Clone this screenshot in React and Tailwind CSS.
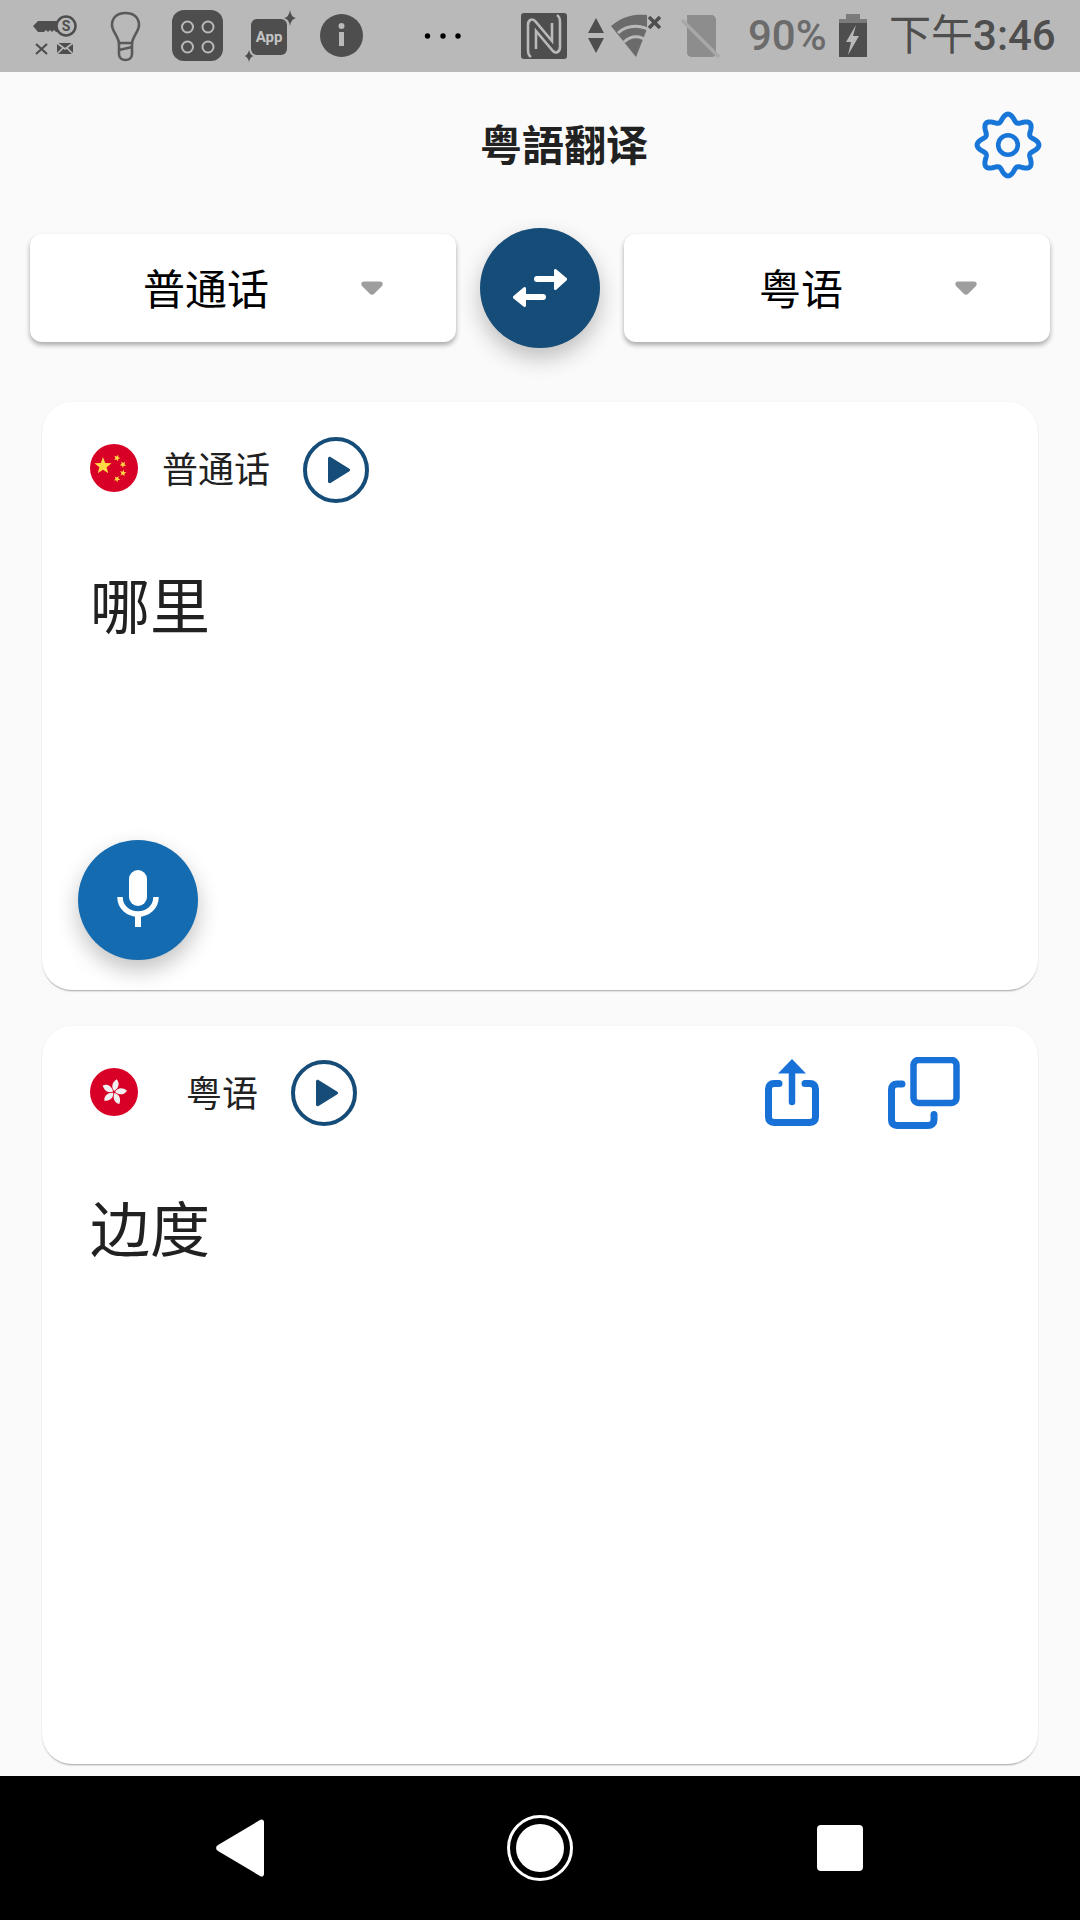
import React from "react";

const CJK = { fontFamily: '"Noto Sans CJK SC", "Noto Sans", sans-serif' };

function Sparkle({ x, y, r }) {
  return <path d={`M${x} ${y - r}Q${x + 1} ${y - 1} ${x + r * 0.75} ${y}Q${x + 1} ${y + 1} ${x} ${y + r}Q${x - 1} ${y + 1} ${x - r * 0.75} ${y}Q${x - 1} ${y - 1} ${x} ${y - r}Z`} fill="#4e4e4e" />;
}

function StatusBar() {
  return (
    <div className="relative h-[72px] shrink-0 bg-[#b9b9b9]">
      <svg width="1080" height="72" viewBox="0 0 1080 72" className="absolute inset-0 block">
        <g fill="#4e4e4e">
          <path d="M33 26l5-5h21v11h-3l-2-2-2 2-2-2-2 2-2-2-2 2h-6z" />
          <circle cx="66" cy="26" r="9.5" fill="#b9b9b9" stroke="#4e4e4e" strokeWidth="2.5" />
          <path d="M36 44l11 10M47 44L36 54" stroke="#4e4e4e" strokeWidth="2.2" />
          <path d="M57 43h16v11H57z" />
          <path d="M57 43l8 6 8-6M57 54l6-6M73 54l-6-6" stroke="#b9b9b9" strokeWidth="1.6" fill="none" />
        </g>
        <text x="66" y="31" textAnchor="middle" fontFamily="Roboto" fontWeight="700" fontSize="14" fill="#4e4e4e">S</text>
        <path d="M119 43C118 36 112 31 112 25C112 17 118 13 125.500 13C133 13 139 17 139 25C139 31 133 36 132 43Z" fill="none" stroke="#5a5a5a" strokeWidth="2.6" />
        <path d="M119 43V54C119 58 122 60 125.500 60C129 60 132 58 132 54V43M119 50L132 47" fill="none" stroke="#5a5a5a" strokeWidth="2.6" />
        <rect x="172" y="10" width="51" height="51" rx="12" fill="#4e4e4e" />
        {[[187.500, 27], [208, 27], [187.500, 47], [208, 47]].map(([x, y]) => (
          <circle key={`${x}-${y}`} cx={x} cy={y} r="5.500" fill="none" stroke="#b9b9b9" strokeWidth="2" />
        ))}
        <rect x="251" y="19" width="36" height="36" rx="6" fill="#4e4e4e" />
        <text x="269" y="42" textAnchor="middle" fontFamily="Roboto" fontWeight="700" fontSize="15" fill="#c4c4c4">App</text>
        <Sparkle x={290} y={18} r={8} />
        <Sparkle x={249} y={56} r={6} />
        <circle cx="341.500" cy="35.500" r="21.500" fill="#4e4e4e" />
        <circle cx="341.500" cy="26" r="3" fill="#b9b9b9" />
        <rect x="339" y="32" width="5" height="14" fill="#b9b9b9" />
        <circle cx="427.500" cy="36" r="2.700" fill="#000" />
        <circle cx="443" cy="36" r="2.700" fill="#000" />
        <circle cx="458" cy="36" r="2.700" fill="#000" />
        <rect x="521" y="13" width="46" height="46" rx="3" fill="#4e4e4e" />
        <path d="M531 57C528 55 528 52 528 50V25C528 20 532 18 535 21L552 41V23M557 15C560 17 560 20 560 22V47C560 52 556 54 553 51L536 31V49" fill="none" stroke="#b9b9b9" strokeWidth="2.600" />
        <path d="M596 18l8 15h-16zM596 53l8-15h-16z" fill="#4e4e4e" />
        <path d="M611 26C624 15 636 14 647 15V29L636 57Z" fill="#6b6b6b" />
        <path d="M618 33C628 24 643 24 653 33M624 42C631 35 641 35 648 42" fill="none" stroke="#b9b9b9" strokeWidth="3" />
        <path d="M649 17l11 11M660 17L649 28" stroke="#4e4e4e" strokeWidth="3.500" />
        <path d="M687 15H711C714 15 716 17 716 20V54C716 56 714 57 711 57H692C689 57 687 55 687 53Z" fill="#8d8d8d" />
        <path d="M682 20L719 57" stroke="#a8a8a8" strokeWidth="3.500" />
        <path d="M846 14h14v5h7v4H839v-4h7z" fill="#7b7b7b" />
        <rect x="839" y="23" width="28" height="34" fill="#4e4e4e" />
        <path d="M856 25L846 42h5l-3 13 11-19h-6z" fill="#b9b9b9" />
      </svg>
      <span className="absolute left-[748px] top-[10px] text-[42px] leading-[52px] font-medium text-[#6b6b6b]" style={{ fontFamily: "Roboto, sans-serif" }}>90%</span>
      <span className="absolute left-[889px] top-[10px] text-[42px] leading-[52px] text-[#4e4e4e] font-normal" style={{ fontFamily: 'Roboto, "Noto Sans CJK SC", sans-serif' }}>下午<span className="font-medium">3:46</span></span>
    </div>
  );
}

function GearIcon() {
  const pts = [];
  for (let i = 0; i < 320; i++) {
    const t = (i / 320) * Math.PI * 2;
    const r = 27.3 + 3.6 * Math.cos(8 * t);
    const x = 35 + r * Math.sin(t);
    const y = 35 - r * Math.cos(t);
    pts.push(`${x.toFixed(2)},${y.toFixed(2)}`);
  }
  return (
    <svg width="70" height="70" viewBox="0 0 70 70" className="block shrink-0">
      <polygon points={pts.join(" ")} fill="none" stroke="#1976d9" strokeWidth="5" strokeLinejoin="round" />
      <circle cx="35" cy="35" r="9.800" fill="none" stroke="#1976d9" strokeWidth="4.600" />
    </svg>
  );
}

function Header() {
  return (
    <div className="h-[146px] shrink-0 flex items-center pl-[155px] pr-[37px]">
      <h1 className="flex-1 text-center text-[42px] leading-[56px] font-bold text-[#212121] mb-[4px]" style={CJK}>粤語翻译</h1>
      <GearIcon />
    </div>
  );
}

function Dropdown({ label, textClass, arrowClass }) {
  return (
    <div className="w-[426px] h-[108px] bg-white rounded-[12px] shadow-[0_3px_5px_rgba(0,0,0,0.33)] flex items-center">
      <span className={`text-[42px] leading-[56px] text-black mb-[2px] ${textClass}`} style={CJK}>{label}</span>
      <svg width="22" height="14" viewBox="0 0 22 14" className={arrowClass}>
        <path d="M3 0.500H19C21.500 0.500 22.500 3 21 5L13 13C12 14 10 14 9 13L1 5C-0.500 3 0.500 0.500 3 0.500Z" fill="#9e9e9e" />
      </svg>
    </div>
  );
}

function SwapIcon() {
  return (
    <svg width="54" height="38" viewBox="0 0 54 38" fill="#fff" className="block">
      <path d="M24 7H41V1.500C41 0 42.500 -0.500 43.500 0.500L53.500 9C54.300 9.800 54.300 10.700 53.500 11.500L43.500 20.500C42.500 21.500 41 21 41 19.500V13H24C22 13 21 12 21 10C21 8 22 7 24 7Z" />
      <path d="M30 25H13V19.500C13 18 11.500 17.500 10.500 18.500L0.500 27C-0.300 27.800 -0.300 28.700 0.500 29.500L10.500 37.500C11.500 38.500 13 38 13 36.500V31H30C32 31 33 30 33 28C33 26 32 25 30 25Z" />
    </svg>
  );
}

function PlayButton({ className }) {
  return (
    <svg width="66" height="66" viewBox="0 0 66 66" className={className}>
      <circle cx="33" cy="33" r="31" fill="none" stroke="#164c78" strokeWidth="4" />
      <path d="M25 21.500C25 20 26.500 19.500 27.500 20L46 31.500C47.500 32.500 47.500 33.500 46 34.500L27.500 46C26.500 46.500 25 46 25 44.500Z" fill="#164c78" />
    </svg>
  );
}

function ChinaFlag() {
  const star = (cx, cy, r, rot) => {
    const pts = [];
    for (let i = 0; i < 10; i++) {
      const a = (rot + i * 36 - 90) * Math.PI / 180;
      const rad = i % 2 ? r * 0.42 : r;
      pts.push(`${cx + rad * Math.cos(a)},${cy + rad * Math.sin(a)}`);
    }
    return <polygon key={`${cx}-${cy}`} points={pts.join(" ")} fill="#ffda44" />;
  };
  return (
    <svg width="48" height="48" viewBox="0 0 48 48" className="mb-[4px]">
      <circle cx="24" cy="24" r="24" fill="#d80027" />
      {star(13, 22, 9, 0)}
      {star(27, 14, 3.500, 20)}
      {star(33, 20.500, 3.500, 40)}
      {star(33, 29, 3.500, 10)}
      {star(27, 35, 3.500, 30)}
    </svg>
  );
}

function HkFlag() {
  return (
    <svg width="48" height="48" viewBox="0 0 48 48" className="mb-[2px]">
      <circle cx="24" cy="24" r="24" fill="#d80027" />
      {[0, 72, 144, 216, 288].map((a) => (
        <path key={a} transform={`rotate(${a + 12} 24 24)`} d="M24 23C20 20 20 15 24 11C28 14 28 19 24 23Z" fill="#f0f0f0" />
      ))}
    </svg>
  );
}

function ShareIcon() {
  return (
    <svg width="54" height="68" viewBox="0 0 54 68" fill="none" className="block">
      <path d="M14 24.500H9C5.500 24.500 3.500 26.500 3.500 30V58C3.500 61.500 5.500 63.500 9 63.500H45C48.500 63.500 50.500 61.500 50.500 58V30C50.500 26.500 48.500 24.500 45 24.500H40" stroke="#1871d6" strokeWidth="7" strokeLinecap="round" />
      <path d="M27 43V12" stroke="#1871d6" strokeWidth="6.500" strokeLinecap="round" />
      <path d="M27 0L41 14.500H13Z" fill="#1871d6" />
    </svg>
  );
}

function CopyIcon() {
  return (
    <svg width="72" height="72" viewBox="0 0 72 72" fill="none" className="block">
      <rect x="25.500" y="3" width="43" height="43" rx="5" stroke="#1871d6" strokeWidth="6.500" />
      <path d="M14 27H9C5.500 27 3.500 29 3.500 32.500V63C3.500 66.500 5.500 68.500 9 68.500H40C43.500 68.500 46 66.500 46 63V57.500" stroke="#1871d6" strokeWidth="7" strokeLinecap="round" />
    </svg>
  );
}

function MicIcon() {
  return (
    <svg width="42" height="57" viewBox="0 0 42 57" className="block mb-[4px]">
      <rect x="12" y="0" width="18" height="36" rx="9" fill="#fff" />
      <path d="M3 27C3 37 11 44 21 44C31 44 39 37 39 27" fill="none" stroke="#fff" strokeWidth="5.500" />
      <rect x="18" y="43" width="6" height="14" fill="#fff" />
    </svg>
  );
}

function NavBar() {
  return (
    <div className="h-[144px] shrink-0 bg-black flex items-center">
      <svg width="48" height="58" viewBox="0 0 48 58" className="ml-[216px]">
        <path d="M44 1C46 -0.500 48 1 48 3V55C48 57 46 58.500 44 57L2 32C-0.500 30.500 -0.500 27.500 2 26Z" fill="#fff" />
      </svg>
      <svg width="66" height="66" viewBox="0 0 66 66" className="ml-[243px]">
        <circle cx="33" cy="33" r="31.500" fill="none" stroke="#fff" strokeWidth="3" />
        <circle cx="33" cy="33" r="24" fill="#fff" />
      </svg>
      <div className="ml-[244px] w-[46px] h-[46px] rounded-[4px] bg-white" />
    </div>
  );
}

export default function App() {
  return (
    <div className="w-[1080px] h-[1920px] flex flex-col bg-[#fafafa] overflow-hidden" style={CJK}>
      <StatusBar />
      <Header />
      <div className="h-[120px] shrink-0 mt-[10px] flex items-center justify-between px-[30px]">
        <Dropdown label="普通话" textClass="ml-[113px]" arrowClass="ml-[92px]" />
        <div className="w-[120px] h-[120px] rounded-full bg-[#164c78] shadow-[0_10px_22px_rgba(0,0,0,0.24)] flex items-center justify-center">
          <SwapIcon />
        </div>
        <Dropdown label="粤语" textClass="ml-[135px]" arrowClass="ml-[112px]" />
      </div>
      <div className="h-[588px] shrink-0 mt-[54px] mx-[42px] bg-white rounded-[30px] shadow-[0_2px_2px_-1px_rgba(0,0,0,0.35),0_0_2px_rgba(0,0,0,0.06)] flex flex-col">
        <div className="flex items-center mt-[35px] ml-[48px]">
          <ChinaFlag />
          <span className="ml-[24px] mb-[6px] text-[36px] leading-[48px] text-[#212121]" style={CJK}>普通话</span>
          <PlayButton className="ml-[33px]" />
        </div>
        <p className="mt-[60px] ml-[48px] text-[60px] leading-[80px] text-[#212121]" style={CJK}>哪里</p>
        <div className="mt-auto mb-[30px] ml-[36px] w-[120px] h-[120px] rounded-full bg-[#146bb0] shadow-[0_10px_22px_rgba(0,0,0,0.24)] flex items-center justify-center">
          <MicIcon />
        </div>
      </div>
      <div className="h-[738px] shrink-0 mt-[36px] mx-[42px] bg-white rounded-[30px] shadow-[0_2px_2px_-1px_rgba(0,0,0,0.35),0_0_2px_rgba(0,0,0,0.06)] flex flex-col">
        <div className="flex items-center mt-[31px] ml-[48px]">
          <HkFlag />
          <span className="ml-[48px] mb-[4px] text-[36px] leading-[48px] text-[#212121]" style={CJK}>粤语</span>
          <PlayButton className="ml-[33px]" />
          <div className="ml-[408px]"><ShareIcon /></div>
          <div className="ml-[69px]"><CopyIcon /></div>
        </div>
        <p className="mt-[57px] ml-[48px] text-[60px] leading-[80px] text-[#212121]" style={CJK}>边度</p>
      </div>
      <div className="flex-1" />
      <NavBar />
    </div>
  );
}
